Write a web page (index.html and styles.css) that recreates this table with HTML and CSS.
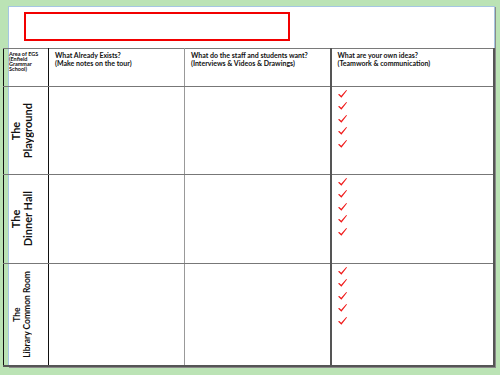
FILE: index.html
```html
<!DOCTYPE html>
<html>
<head>
<meta charset="utf-8">
<link rel="stylesheet" href="styles.css">
</head>
<body>
<div class="slide">
  <div class="title-box"></div>
  <table class="grid">
    <colgroup>
      <col class="c1"><col class="c2"><col class="c3"><col class="c4">
    </colgroup>
    <tr class="head">
      <td class="area">Area of EGS<br>(Enfield<br>Grammar<br>School)</td>
      <td class="col2">What Already Exists?<br>(Make notes on the tour)</td>
      <td class="col3">What do the staff and students want?<br>(Interviews &amp; Videos &amp; Drawings)</td>
      <td class="col4">What are your own ideas?<br>(Teamwork &amp; communication)</td>
    </tr>
    <tr class="r1">
      <td class="label"><div class="vtext big">The<br>Playground</div></td>
      <td class="col2"></td>
      <td class="col3"></td>
      <td class="col4 ticks">
        <div class="tick-list">
          <svg class="tick" viewBox="0 0 9 8"><path d="M0 4.6 L1.3 3.9 L3.2 5.7 L8.3 0 L9 0.5 L3.4 7.8 Z"/></svg>
          <svg class="tick" viewBox="0 0 9 8"><path d="M0 4.6 L1.3 3.9 L3.2 5.7 L8.3 0 L9 0.5 L3.4 7.8 Z"/></svg>
          <svg class="tick" viewBox="0 0 9 8"><path d="M0 4.6 L1.3 3.9 L3.2 5.7 L8.3 0 L9 0.5 L3.4 7.8 Z"/></svg>
          <svg class="tick" viewBox="0 0 9 8"><path d="M0 4.6 L1.3 3.9 L3.2 5.7 L8.3 0 L9 0.5 L3.4 7.8 Z"/></svg>
          <svg class="tick" viewBox="0 0 9 8"><path d="M0 4.6 L1.3 3.9 L3.2 5.7 L8.3 0 L9 0.5 L3.4 7.8 Z"/></svg>
        </div>
      </td>
    </tr>
    <tr class="r2">
      <td class="label"><div class="vtext big">The<br>Dinner Hall</div></td>
      <td class="col2"></td>
      <td class="col3"></td>
      <td class="col4 ticks">
        <div class="tick-list">
          <svg class="tick" viewBox="0 0 9 8"><path d="M0 4.6 L1.3 3.9 L3.2 5.7 L8.3 0 L9 0.5 L3.4 7.8 Z"/></svg>
          <svg class="tick" viewBox="0 0 9 8"><path d="M0 4.6 L1.3 3.9 L3.2 5.7 L8.3 0 L9 0.5 L3.4 7.8 Z"/></svg>
          <svg class="tick" viewBox="0 0 9 8"><path d="M0 4.6 L1.3 3.9 L3.2 5.7 L8.3 0 L9 0.5 L3.4 7.8 Z"/></svg>
          <svg class="tick" viewBox="0 0 9 8"><path d="M0 4.6 L1.3 3.9 L3.2 5.7 L8.3 0 L9 0.5 L3.4 7.8 Z"/></svg>
          <svg class="tick" viewBox="0 0 9 8"><path d="M0 4.6 L1.3 3.9 L3.2 5.7 L8.3 0 L9 0.5 L3.4 7.8 Z"/></svg>
        </div>
      </td>
    </tr>
    <tr class="r3">
      <td class="label"><div class="vtext small">The<br>Library Common Room</div></td>
      <td class="col2"></td>
      <td class="col3"></td>
      <td class="col4 ticks">
        <div class="tick-list">
          <svg class="tick" viewBox="0 0 9 8"><path d="M0 4.6 L1.3 3.9 L3.2 5.7 L8.3 0 L9 0.5 L3.4 7.8 Z"/></svg>
          <svg class="tick" viewBox="0 0 9 8"><path d="M0 4.6 L1.3 3.9 L3.2 5.7 L8.3 0 L9 0.5 L3.4 7.8 Z"/></svg>
          <svg class="tick" viewBox="0 0 9 8"><path d="M0 4.6 L1.3 3.9 L3.2 5.7 L8.3 0 L9 0.5 L3.4 7.8 Z"/></svg>
          <svg class="tick" viewBox="0 0 9 8"><path d="M0 4.6 L1.3 3.9 L3.2 5.7 L8.3 0 L9 0.5 L3.4 7.8 Z"/></svg>
          <svg class="tick" viewBox="0 0 9 8"><path d="M0 4.6 L1.3 3.9 L3.2 5.7 L8.3 0 L9 0.5 L3.4 7.8 Z"/></svg>
        </div>
      </td>
    </tr>
  </table>
</div>
</body>
</html>
```
FILE: styles.css
```css
html, body {
  margin: 0;
  padding: 0;
}
body {
  width: 500px;
  height: 375px;
  overflow: hidden;
  background: #bbe3b5;
  font-family: Lato, "Open Sans", sans-serif;
  color: #111;
}
.slide {
  box-sizing: border-box;
  margin: 6px 0 0 8px;
  width: 487px;
  height: 361px;
  background: #fff;
  border: 1px solid #a5c6e2;
  box-shadow: 1px 1px 0 #8a8a8a;
  padding-top: 5px;
}
.title-box {
  box-sizing: border-box;
  margin-left: 15px;
  width: 266px;
  height: 29px;
  border: 2px solid #f20000;
}
.grid {
  margin-top: 7px;
  margin-left: -6px;
  width: 490px;
  table-layout: fixed;
  border-collapse: collapse;
  border-top: 1px solid #7a7a7a;
  border-left: 1px solid #111;
  border-right: 2px solid #555;
  border-bottom: 2px solid #555;
}
.c1 { width: 45px; }
.c2 { width: 136px; }
.c3 { width: 146px; }
.c4 { width: 163px; }
td {
  padding: 0;
  vertical-align: top;
  border-bottom: 1px solid #777;
}
td.area, td.label { border-right: 1px solid #111; }
td.col2 { border-right: 1px solid #999; }
td.col3 { border-right: 2px solid #555; }
.head { height: 38px; }
.r1 { height: 88px; }
.r2 { height: 89px; }
.r3 { height: 102px; }
.head td {
  font-weight: 700;
  font-size: 7px;
  line-height: 8px;
  padding: 2px 0 0 6px;
}
.head td.area {
  font-size: 5.5px;
  line-height: 5px;
  padding: 3px 0 0 5px;
}
td.label {
  vertical-align: middle;
  padding-right: 8px;
}
.vtext {
  writing-mode: vertical-rl;
  transform: rotate(180deg);
  text-align: center;
  font-weight: 700;
  margin: 0 auto;
}
.vtext.big {
  font-size: 11px;
  line-height: 12px;
}
.vtext.small {
  font-size: 8.5px;
  line-height: 10px;
}
.tick-list {
  display: flex;
  flex-direction: column;
  gap: 4.4px;
  padding: 3px 0 0 6px;
}
.tick {
  width: 9px;
  height: 8px;
  fill: #f01818;
}
```
